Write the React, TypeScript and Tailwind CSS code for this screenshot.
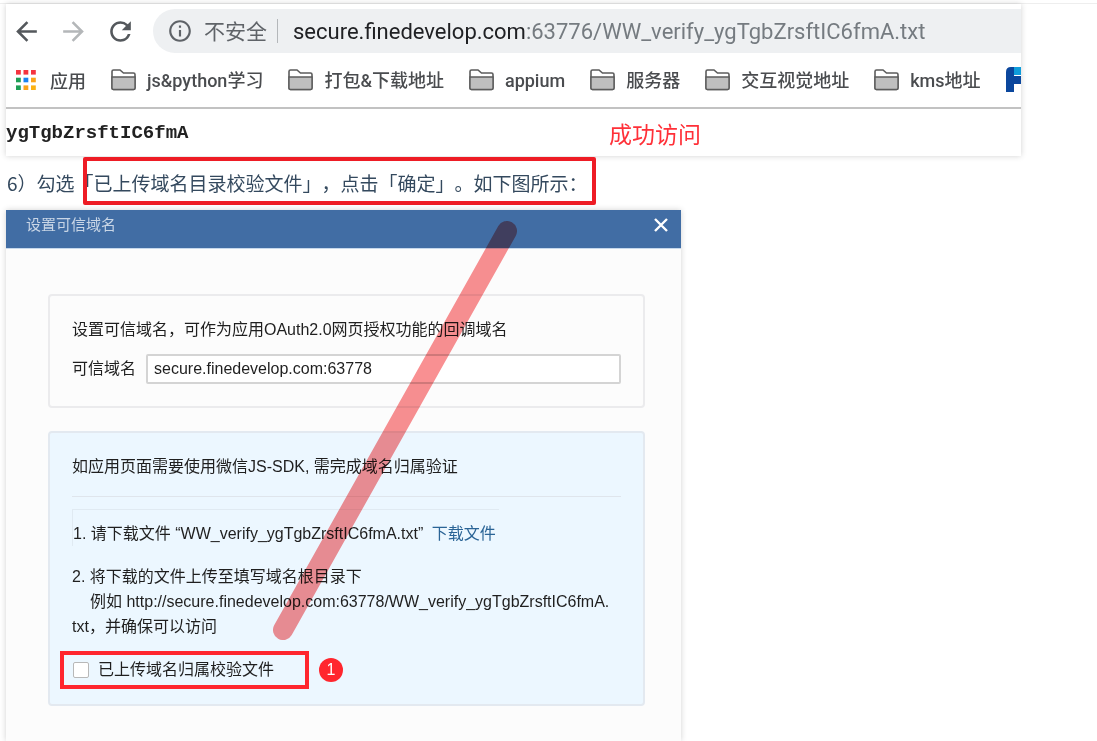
import React from "react";
import { MdArrowBack, MdArrowForward, MdInfoOutline, MdRefresh } from "react-icons/md";

const bookmarks = ["js&python学习", "打包&下载地址", "appium", "服务器", "交互视觉地址", "kms地址"];

const appDots = [
  "#f5333f", "#f5333f", "#f5333f",
  "#1e9e55", "#1a82f0", "#fba31a",
  "#1e9e55", "#fba31a", "#fbb114",
];

const AppsIcon: React.FC = () => (
  <svg width="20" height="20" viewBox="0 0 20 20" className="shrink-0" aria-hidden="true">
    {appDots.map((color, i) => (
      <rect key={i} x={(i % 3) * 7.5} y={Math.floor(i / 3) * 7.7} width="4.8" height="4.6" fill={color} />
    ))}
  </svg>
);

const FolderIcon: React.FC = () => (
  <svg width="25" height="22" viewBox="0 0 25 22" className="shrink-0" aria-hidden="true">
    <path d="M1 19V2.5Q1 1 2.5 1H9L12.5 4H22.5Q24 4 24 5.5V19Q24 20.5 22.5 20.5H2.5Q1 20.5 1 19Z" fill="#fff" stroke="#5c5c5c" strokeWidth="1.6" />
    <path d="M1 8H24V19Q24 20.5 22.5 20.5H2.5Q1 20.5 1 19Z" fill="#bfbfbf" stroke="#5c5c5c" strokeWidth="1.4" />
  </svg>
);

const BrowserShot: React.FC = () => (
  <section className="w-full max-w-[1015px] overflow-hidden bg-white shadow-[0_0_6px_rgba(0,0,0,0.18)]">
    <div className="flex items-center gap-4 pt-[5px] pl-[5px]">
      <button aria-label="后退" className="text-[#54585c]">
        <MdArrowBack size={31} />
      </button>
      <button aria-label="前进" className="text-[#b4b7b9]">
        <MdArrowForward size={31} />
      </button>
      <button aria-label="刷新" className="text-[#54585c]">
        <MdRefresh size={31} />
      </button>
      <div className="ml-px flex h-11 min-w-0 flex-1 items-center rounded-l-full bg-[#eef0f2] pl-[14px] whitespace-nowrap">
        <MdInfoOutline size={26} className="shrink-0 text-[#5f6368]" />
        <span className="ml-[11px] text-[21px] text-[#5f6368]">不安全</span>
        <span className="ml-[10px] h-6 w-px bg-[#b4b7ba]" />
        <span className="ml-[15px] font-[Roboto] text-[22px] text-[#757b80]">
          <span className="text-[#202124]">secure.finedevelop.com</span>
          :63776/WW_verify_ygTgbZrsftIC6fmA.txt
        </span>
      </div>
    </div>
    <nav className="flex h-14 items-center gap-[25px] border-b-2 border-[#c2c2c2] pl-[10px] text-[18px] font-medium whitespace-nowrap text-[#4a4c4f]">
      <a href="#apps" className="flex items-center gap-[14px]">
        <AppsIcon />
        应用
      </a>
      {bookmarks.map((name) => (
        <a key={name} href="#bookmark" className="flex items-center gap-[11px] font-[Roboto,'Noto_Sans_CJK_SC',sans-serif]">
          <FolderIcon />
          {name}
        </a>
      ))}
      <svg width="28" height="26" viewBox="0 0 28 26" className="shrink-0" aria-hidden="true">
        <path d="M0 25V5Q0 0 5 0H8V9H28V17H8V25Z" fill="#0b479d" />
        <path d="M8 0H28V8H8Z" fill="#0f9ddb" />
      </svg>
    </nav>
    <div className="flex h-[47px] items-center pt-px">
      <pre className="flex-1 font-['Liberation_Mono',monospace] text-[19px] font-bold text-[#222]">ygTgbZrsftIC6fmA</pre>
      <strong className="w-[412px] text-[23px] font-normal text-[#ff3038]">成功访问</strong>
    </div>
  </section>
);

const DomainDialog: React.FC = () => (
  <section className="relative flex w-full max-w-[675px] flex-1 flex-col bg-[#fcfcfc] font-['Liberation_Sans','Noto_Sans_CJK_SC',sans-serif] text-[16px] text-[#1f1f1f] shadow-[0_0_6px_rgba(0,0,0,0.18)]">
    <header className="flex h-[39px] items-start justify-between border-b border-[#c6d8ec] bg-[#416da4] pr-3 pl-5">
      <h2 className="pt-1 text-[15px] leading-[22px] text-[#c9d6e6]">设置可信域名</h2>
      <button aria-label="关闭" className="pt-[7px] text-white">
        <svg width="16" height="16" viewBox="0 0 16 16" fill="none" stroke="currentColor" strokeWidth="2.4">
          <path d="M2 2L14 14M14 2L2 14" />
        </svg>
      </button>
    </header>

    <div className="flex flex-col gap-[23px] pt-[45px] pr-[36px] pb-[35px] pl-[42px]">
      <div className="rounded border-2 border-[#ebebed] p-[22px]">
        <p className="leading-6">设置可信域名，可作为应用OAuth2.0网页授权功能的回调域名</p>
        <div className="mt-[12px] flex items-center gap-[10px]">
          <label htmlFor="domain">可信域名</label>
          <input
            id="domain"
            type="text"
            defaultValue="secure.finedevelop.com:63778"
            className="h-[30px] min-w-0 flex-1 rounded-xs border-2 border-[#d4d4d4] bg-white px-[6px]"
          />
        </div>
      </div>

      <div className="rounded border-2 border-[#e3e9f0] bg-[#ecf7ff] px-[22px] pt-[22px] pb-[15px]">
        <p className="leading-6">如应用页面需要使用微信JS-SDK, 需完成域名归属验证</p>
        <hr className="mt-[17px] border-[#dfe5ec]" />
        <p className="mt-3 w-fit border-t border-l border-[#e0eaf2] pt-[12px] pr-[3px] leading-6">
          1. 请下载文件 “WW_verify_ygTgbZrsftIC6fmA.txt”{" "}
          <a href="#download" className="ml-1 text-[#2a6496]">下载文件</a>
        </p>
        <div className="mt-[18px] leading-[25px]">
          <p>2. 将下载的文件上传至填写域名根目录下</p>
          <p className="pr-2 indent-[18px] break-all">
            例如 http://secure.finedevelop.com:63778/WW_verify_ygTgbZrsftIC6fmA.txt，并确保可以访问
          </p>
        </div>
        <div className="mt-[12px] -ml-3 flex items-center gap-[10px]">
          <label className="flex h-[38px] w-[249px] items-center gap-[9px] border-4 border-[#ff262e] pl-[9px]">
            <input type="checkbox" className="size-4 appearance-none rounded-xs border border-[#b8b8b8] bg-white" />
            已上传域名归属校验文件
          </label>
          <span className="flex size-6 items-center justify-center rounded-full bg-[#ff262e] text-white">1</span>
        </div>
      </div>
    </div>

    {/* marker stroke from the step text down to the checkbox */}
    <svg
      width="260"
      height="440"
      viewBox="0 0 260 440"
      className="pointer-events-none absolute top-0 left-[267px] mix-blend-multiply"
      aria-hidden="true"
    >
      <path d="M234 21L10 420" stroke="#f99092" strokeWidth="20" strokeLinecap="round" />
    </svg>
  </section>
);

const App: React.FC = () => (
  <main className="flex min-h-screen flex-col overflow-hidden bg-white pt-[3px] font-['Noto_Sans_CJK_SC',sans-serif]">
    <article className="flex flex-1 flex-col border-t border-[#eee] px-[6px]">
      <BrowserShot />
      <p className="flex h-[54px] items-center pl-px text-[19px] whitespace-nowrap text-[#34495e] [text-spacing-trim:space-all]">
        <span>6）勾选</span>
        <span className="relative">
          「已上传域名目录校验文件」，点击「确定」。如下图所示：
          <span className="absolute -top-3 -right-2 -bottom-2 left-2 rounded-xs border-4 border-[#ee1c25]" />
        </span>
      </p>
      <DomainDialog />
    </article>
  </main>
);

export default App;
